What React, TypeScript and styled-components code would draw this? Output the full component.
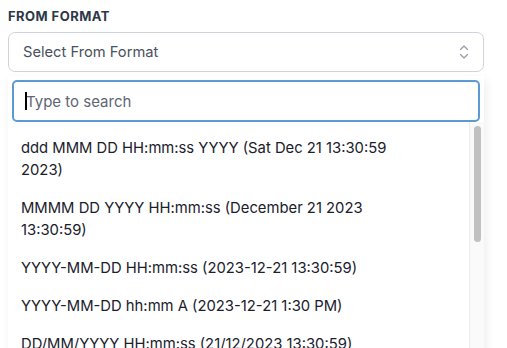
import React from 'react';
import styled, { createGlobalStyle } from 'styled-components';

const Global = createGlobalStyle`
  html, body {
    margin: 0;
    padding: 0;
    background: #fff;
  }
  body {
    font-family: Inter, "Liberation Sans", sans-serif;
    -webkit-font-smoothing: antialiased;
  }
`;

const formats = [
  'ddd MMM DD HH:mm:ss YYYY (Sat Dec 21 13:30:59 2023)',
  'MMMM DD YYYY HH:mm:ss (December 21 2023 13:30:59)',
  'YYYY-MM-DD HH:mm:ss (2023-12-21 13:30:59)',
  'YYYY-MM-DD hh:mm A (2023-12-21 1:30 PM)',
  'DD/MM/YYYY HH:mm:ss (21/12/2023 13:30:59)',
  'MM/DD/YYYY HH:mm:ss (12/21/2023 13:30:59)',
  'DD-MM-YYYY (21-12-2023)',
  'MM-DD-YYYY (12-21-2023)',
  'YYYY/MM/DD (2023/12/21)',
];

const Page = styled.div`
  padding: 8px;
  width: 476px;
`;

const Label = styled.div`
  font-size: 13px;
  font-weight: 700;
  letter-spacing: 0.45px;
  color: #2d3748;
  text-transform: uppercase;
  line-height: 15px;
  padding-top: 1px;
  margin-bottom: 8px;
`;

const Trigger = styled.button`
  box-sizing: border-box;
  width: 100%;
  height: 40px;
  display: flex;
  align-items: center;
  justify-content: space-between;
  padding: 0 14px;
  background: #fff;
  border: 1px solid #d0d3d9;
  border-radius: 7px;
  font: inherit;
  font-size: 14.7px;
  color: #4a5160;
  cursor: pointer;
`;

const Popover = styled.div`
  margin-top: 4px;
  background: #fff;
  box-shadow: 2px 4px 10px rgba(0, 0, 0, 0.07);
  padding-top: 4px;
`;

const SearchWrap = styled.div`
  position: relative;
  margin: 0 4px;
`;

const SearchBox = styled.input`
  box-sizing: border-box;
  display: block;
  width: 100%;
  height: 42px;
  padding: 0 12px;
  border: 2px solid #5b9bd5;
  border-radius: 5px;
  font: inherit;
  font-size: 15px;
  color: #1a202c;
  outline: none;
  &::placeholder {
    color: #5f6673;
  }
`;

const Caret = styled.span`
  position: absolute;
  left: 13px;
  top: 12px;
  width: 1.5px;
  height: 18px;
  background: #000;
`;

const Body = styled.div`
  display: flex;
  height: 300px;
`;

const List = styled.ul`
  flex: 1;
  list-style: none;
  margin: 0;
  padding: 6.5px 0 0;
  overflow: hidden;
`;

const Option = styled.li`
  padding: 8.1px 48px 8.1px 13px;
  font-size: 14.8px;
  line-height: 22px;
  color: #1a202c;
  cursor: pointer;
`;

const Track = styled.div`
  box-sizing: border-box;
  width: 15px;
  padding: 4px 3px 0 4px;
  background: #fafafa;
  border-left: 1px solid #ececec;
`;

const Thumb = styled.div`
  height: 116px;
  border-radius: 4px;
  background: #c1c1c1;
`;

function UpDownIcon() {
  return (
    <svg width="10" height="16" viewBox="0 0 10 16" fill="none">
      <path
        d="M1.5 5.5 5 2l3.5 3.5M1.5 10.5 5 14l3.5-3.5"
        stroke="#9aa0ab"
        strokeWidth="1.4"
        strokeLinecap="round"
        strokeLinejoin="round"
      />
    </svg>
  );
}

export default function App() {
  return (
    <>
      <Global />
      <Page>
        <Label>From Format</Label>
        <Trigger type="button">
          <span>Select From Format</span>
          <UpDownIcon />
        </Trigger>
        <Popover>
          <SearchWrap>
            <SearchBox placeholder="Type to search" />
            <Caret />
          </SearchWrap>
          <Body>
            <List>
              {formats.map((f) => (
                <Option key={f}>{f}</Option>
              ))}
            </List>
            <Track>
              <Thumb />
            </Track>
          </Body>
        </Popover>
      </Page>
    </>
  );
}
